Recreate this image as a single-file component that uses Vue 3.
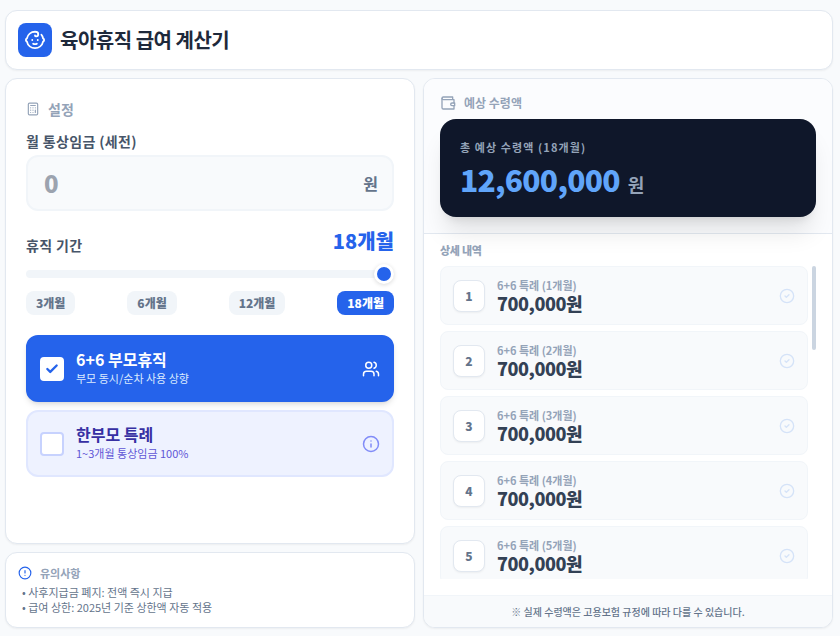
<script setup>
import { ref, computed, onMounted, onBeforeUnmount, watch, nextTick } from 'vue'

const wage = ref('')
const months = ref(18)
const presets = [3, 6, 12, 18]
const bothParents = ref(true)
const singleParent = ref(false)

const monthly = 700000
const format = (n) => n.toLocaleString('en-US')
const rows = computed(() =>
  Array.from({ length: Number(months.value) }, (_, i) => ({
    month: i + 1,
    label: bothParents.value && i < 6 ? `6+6 특례 (${i + 1}개월)` : `일반 (${i + 1}개월)`,
    amount: monthly
  }))
)
const total = computed(() => rows.value.reduce((sum, r) => sum + r.amount, 0))

const list = ref(null)
const thumb = ref({ size: 0, top: 0 })
function measure() {
  const el = list.value
  const overflowing = el.scrollHeight > el.clientHeight
  thumb.value = {
    size: overflowing ? (el.clientHeight / el.scrollHeight) * 100 : 0,
    top: (el.scrollTop / el.scrollHeight) * 100
  }
}
onMounted(() => {
  measure()
  window.addEventListener('resize', measure)
})
onBeforeUnmount(() => window.removeEventListener('resize', measure))
watch(months, () => nextTick(measure))
</script>

<template>
  <div class="page">
    <header class="card header">
      <span class="logo">
        <svg class="icon" width="22" height="22" viewBox="0 0 24 24" aria-hidden="true">
          <path d="M9 12h.01M15 12h.01M10 16c.5.3 1.2.5 2 .5s1.5-.2 2-.5" />
          <path d="M19 6.3a9 9 0 0 1 1.8 3.9 2 2 0 0 1 0 3.6 9 9 0 0 1-17.6 0 2 2 0 0 1 0-3.6A9 9 0 0 1 12 3c2 0 3.5 1.1 3.5 2.5s-.9 2.5-2 2.5c-.8 0-1.5-.4-1.5-1" />
        </svg>
      </span>
      <h1>육아휴직 급여 계산기</h1>
    </header>

    <main class="columns">
      <div class="left">
        <section class="card settings">
          <h2 class="section-title">
            <svg class="icon" width="14" height="14" viewBox="0 0 24 24" aria-hidden="true">
              <rect x="4" y="2" width="16" height="20" rx="2" />
              <path d="M8 6h8M16 14v4M16 10h.01M12 10h.01M8 10h.01M12 14h.01M8 14h.01M12 18h.01M8 18h.01" />
            </svg>
            설정
          </h2>

          <label class="field-label" for="wage">월 통상임금 (세전)</label>
          <div class="wage-box">
            <input id="wage" v-model="wage" type="text" inputmode="numeric" placeholder="0" />
            <span>원</span>
          </div>

          <div class="period-head">
            <label class="field-label" for="months">휴직 기간</label>
            <output for="months">{{ months }}개월</output>
          </div>
          <input id="months" v-model="months" class="slider" type="range" min="1" max="18" />
          <div class="presets">
            <button
              v-for="p in presets"
              :key="p"
              type="button"
              :class="{ active: Number(months) === p }"
              @click="months = p"
            >{{ p }}개월</button>
          </div>

          <div class="options">
            <label class="option both">
              <span class="tick">
                <input v-model="bothParents" type="checkbox" />
                <svg v-if="bothParents" class="icon" width="14" height="14" viewBox="0 0 24 24" aria-hidden="true">
                  <path d="M20 6 9 17l-5-5" />
                </svg>
              </span>
              <span class="option-text">
                <strong>6+6 부모휴직</strong>
                <small>부모 동시/순차 사용 상향</small>
              </span>
              <svg class="icon" width="18" height="18" viewBox="0 0 24 24" aria-hidden="true">
                <path d="M16 21v-2a4 4 0 0 0-4-4H6a4 4 0 0 0-4 4v2" />
                <circle cx="9" cy="7" r="4" />
                <path d="M22 21v-2a4 4 0 0 0-3-3.87M16 3.13a4 4 0 0 1 0 7.75" />
              </svg>
            </label>
            <label class="option single">
              <span class="tick">
                <input v-model="singleParent" type="checkbox" />
                <svg v-if="singleParent" class="icon" width="14" height="14" viewBox="0 0 24 24" aria-hidden="true">
                  <path d="M20 6 9 17l-5-5" />
                </svg>
              </span>
              <span class="option-text">
                <strong>한부모 특례</strong>
                <small>1~3개월 통상임금 100%</small>
              </span>
              <svg class="icon" width="18" height="18" viewBox="0 0 24 24" aria-hidden="true">
                <circle cx="12" cy="12" r="10" />
                <path d="M12 16v-4M12 8h.01" />
              </svg>
            </label>
          </div>
        </section>

        <section class="card notes">
          <h2>
            <svg class="icon" width="14" height="14" viewBox="0 0 24 24" aria-hidden="true">
              <circle cx="12" cy="12" r="10" />
              <path d="M12 8v4M12 16h.01" />
            </svg>
            유의사항
          </h2>
          <ul>
            <li>• 사후지급금 폐지: 전액 즉시 지급</li>
            <li>• 급여 상한: 2025년 기준 상한액 자동 적용</li>
          </ul>
        </section>
      </div>

      <section class="card result">
        <div class="summary">
          <h2>
            <svg class="icon" width="16" height="16" viewBox="0 0 24 24" aria-hidden="true">
              <path d="M21 12V7H5a2 2 0 0 1 0-4h14v4" />
              <path d="M3 5v14a2 2 0 0 0 2 2h16v-5" />
              <path d="M18 12a2 2 0 0 0 0 4h4v-4Z" />
            </svg>
            예상 수령액
          </h2>
          <div class="total">
            <p class="total-label">총 예상 수령액 ({{ months }}개월)</p>
            <p class="total-value"><b>{{ format(total) }}</b><span>원</span></p>
          </div>
        </div>

        <div class="detail">
          <h3>상세 내역</h3>
          <div class="scroller">
            <ul ref="list" class="list" @scroll="measure">
              <li v-for="r in rows" :key="r.month">
                <span class="badge">{{ r.month }}</span>
                <span class="row-text">
                  <small>{{ r.label }}</small>
                  <strong>{{ format(r.amount) }}원</strong>
                </span>
                <svg class="icon" width="16" height="16" viewBox="0 0 24 24" aria-hidden="true">
                  <circle cx="12" cy="12" r="10" />
                  <path d="m9 12 2 2 4-4" />
                </svg>
              </li>
            </ul>
            <div class="track" aria-hidden="true">
              <div class="thumb" :style="{ height: thumb.size + '%', top: thumb.top + '%' }"></div>
            </div>
          </div>
        </div>

        <footer>※ 실제 수령액은 고용보험 규정에 따라 다를 수 있습니다.</footer>
      </section>
    </main>
  </div>
</template>

<style>
body {
  background: #f8fafc;
}
</style>

<style scoped>
* {
  box-sizing: border-box;
}
.page {
  display: flex;
  flex-direction: column;
  gap: 8px;
  height: 100vh;
  padding: 10px 7px 8px 5px;
  color: #1e293b;
  font-family: "Noto Sans CJK KR", sans-serif;
}
h1, h2, h3, p, ul {
  margin: 0;
  padding: 0;
}
ul {
  list-style: none;
}
.icon {
  flex: none;
  fill: none;
  stroke: currentColor;
  stroke-width: 2;
  stroke-linecap: round;
  stroke-linejoin: round;
}
.card {
  border: 1px solid #e2e8f0;
  border-radius: 12px;
  background: #fff;
  box-shadow: 0 1px 2px rgba(0, 0, 0, 0.05);
}
.header {
  display: flex;
  align-items: center;
  gap: 8px;
  padding: 12px;
}
.logo {
  display: flex;
  padding: 6px;
  border-radius: 8px;
  background: #2563eb;
  color: #fff;
}
h1 {
  font-size: 20px;
  line-height: 28px;
  font-weight: 700;
  letter-spacing: -0.025em;
}
.columns {
  display: grid;
  flex: 1;
  grid-template-columns: repeat(2, minmax(0, 1fr));
  gap: 8px;
  min-height: 0;
}
.left {
  display: flex;
  flex-direction: column;
  gap: 8px;
  min-height: 0;
}
.settings {
  flex: 1;
  padding: 20px;
}
.section-title {
  display: flex;
  align-items: center;
  gap: 8px;
  margin-bottom: 12px;
  color: #94a3b8;
  font-size: 14px;
  line-height: 20px;
  font-weight: 700;
}
.field-label {
  display: block;
  color: #475569;
  font-size: 14px;
  line-height: 20px;
  font-weight: 700;
  letter-spacing: 0.025em;
}
.wage-box {
  display: flex;
  align-items: center;
  height: 56px;
  margin: 4px 0 16px;
  padding: 0 14px 0 16px;
  border: 2px solid #f1f5f9;
  border-radius: 12px;
  background: #f8fafc;
}
.wage-box input {
  flex: 1;
  min-width: 0;
  padding: 0;
  border: 0;
  outline: 0;
  background: none;
  color: #1e293b;
  font: 900 24px/32px "Noto Sans CJK KR", sans-serif;
}
.wage-box input::placeholder {
  color: #9ca3af;
}
.wage-box span {
  color: #64748b;
  font-size: 16px;
  font-weight: 700;
}
.period-head {
  display: flex;
  align-items: flex-end;
  justify-content: space-between;
}
.period-head output {
  color: #2563eb;
  font-size: 20px;
  line-height: 28px;
  font-weight: 900;
}
.slider {
  display: block;
  width: 100%;
  height: 8px;
  margin: 15px 0 13px;
  border-radius: 8px;
  background: #f1f5f9;
  appearance: none;
}
.slider::-webkit-slider-thumb {
  width: 20px;
  height: 20px;
  border: 3px solid #fff;
  border-radius: 50%;
  background: #2563eb;
  box-shadow: 0 1px 4px rgba(0, 0, 0, 0.15);
  appearance: none;
}
.presets {
  display: flex;
  justify-content: space-between;
}
.presets button {
  padding: 4px 10px;
  border: 0;
  border-radius: 8px;
  background: #f1f5f9;
  color: #64748b;
  font: 900 12px/16px "Noto Sans CJK KR", sans-serif;
}
.presets .active {
  background: #2563eb;
  color: #fff;
}
.options {
  display: flex;
  flex-direction: column;
  gap: 8px;
  margin-top: 20px;
}
.option {
  display: flex;
  align-items: center;
  gap: 12px;
  padding: 12px;
  border: 2px solid #e0e7ff;
  border-radius: 12px;
  background: #eef2ff;
  color: #818cf8;
}
.option.both {
  border-color: #2563eb;
  background: #2563eb;
  color: #fff;
  box-shadow: 0 4px 6px -1px rgba(0, 0, 0, 0.1), 0 2px 4px -2px rgba(0, 0, 0, 0.1);
}
.tick {
  display: grid;
  flex: none;
  place-items: center;
}
.tick > * {
  grid-area: 1 / 1;
}
.tick input {
  width: 24px;
  height: 24px;
  margin: 0;
  border: 2px solid #c7d2fe;
  border-radius: 4px;
  background: #fff;
  appearance: none;
}
.both .tick input {
  border-color: #fff;
}
.tick .icon {
  z-index: 1;
  color: #2563eb;
  stroke-width: 4;
}
.option-text {
  display: flex;
  flex: 1;
  flex-direction: column;
}
.option-text strong {
  font-size: 16px;
  line-height: 20px;
  font-weight: 700;
}
.option-text small {
  font-size: 11px;
  line-height: 19px;
}
.both small {
  color: #dbeafe;
}
.single strong {
  color: #3730a3;
}
.single small {
  color: #6056d6;
}
.notes {
  padding: 12px;
}
.notes h2 {
  display: flex;
  align-items: center;
  gap: 8px;
  margin-bottom: 4px;
  color: #94a3b8;
  font-size: 11px;
  line-height: 16px;
  font-weight: 700;
}
.notes h2 .icon {
  color: #2563eb;
}
.notes ul {
  padding: 0 4px;
  color: #64748b;
  font-size: 11px;
  line-height: 15px;
}
.result {
  display: flex;
  flex-direction: column;
  min-height: 0;
  overflow: hidden;
}
.summary {
  padding: 16px;
  border-bottom: 1px solid #e2e8f0;
  background: #fbfcfe;
}
.summary h2 {
  display: flex;
  align-items: center;
  gap: 8px;
  margin-bottom: 8px;
  color: #94a3b8;
  font-size: 12px;
  line-height: 16px;
  font-weight: 700;
}
.total {
  padding: 20px;
  border-radius: 16px;
  background: #0f172a;
  color: #94a3b8;
  box-shadow: 0 20px 25px -5px rgba(0, 0, 0, 0.1), 0 8px 10px -6px rgba(0, 0, 0, 0.1);
}
.total-label {
  margin-bottom: 6px;
  font-size: 11px;
  line-height: 16px;
  font-weight: 700;
  letter-spacing: 0.1em;
}
.total-value {
  display: flex;
  align-items: baseline;
  gap: 8px;
}
.total-value b {
  color: #60a5fa;
  font-size: 30px;
  line-height: 36px;
  font-weight: 900;
  letter-spacing: -0.025em;
}
.total-value span {
  font-size: 18px;
  line-height: 20px;
  font-weight: 700;
}
.detail {
  display: flex;
  flex: 1;
  flex-direction: column;
  min-height: 0;
  padding: 8px 16px 16px;
}
.detail h3 {
  margin-bottom: 8px;
  color: #94a3b8;
  font-size: 11px;
  line-height: 16px;
  font-weight: 900;
  letter-spacing: -0.025em;
}
.scroller {
  display: flex;
  flex: 1;
  gap: 4px;
  min-height: 0;
}
.list {
  display: flex;
  flex: 1;
  flex-direction: column;
  gap: 6px;
  min-height: 0;
  overflow-y: auto;
  scrollbar-width: none;
}
.track {
  position: relative;
  width: 4px;
}
.thumb {
  position: absolute;
  width: 100%;
  border-radius: 2px;
  background: #cbd5e1;
}
.list li {
  display: flex;
  flex: none;
  align-items: center;
  gap: 12px;
  height: 59px;
  padding: 0 12px;
  border: 1px solid #f1f5f9;
  border-radius: 8px;
  background: #f8fafc;
  color: #d5e3f8;
}
.badge {
  display: grid;
  flex: none;
  width: 32px;
  height: 32px;
  place-items: center;
  border: 1px solid #e2e8f0;
  border-radius: 8px;
  background: #fff;
  box-shadow: 0 1px 2px rgba(0, 0, 0, 0.05);
  color: #64748b;
  font-size: 12px;
  font-weight: 900;
}
.row-text {
  display: flex;
  flex: 1;
  flex-direction: column;
}
.row-text small {
  color: #94a3b8;
  font-size: 11px;
  line-height: 14px;
  font-weight: 700;
}
.row-text strong {
  color: #334155;
  font-size: 18px;
  line-height: 22px;
  font-weight: 900;
  letter-spacing: -0.025em;
}
footer {
  padding: 8px;
  border-top: 1px solid #f1f5f9;
  background: #f8fafc;
  color: #64748b;
  font-size: 10px;
  line-height: 15px;
  font-weight: 500;
  text-align: center;
}
</style>
